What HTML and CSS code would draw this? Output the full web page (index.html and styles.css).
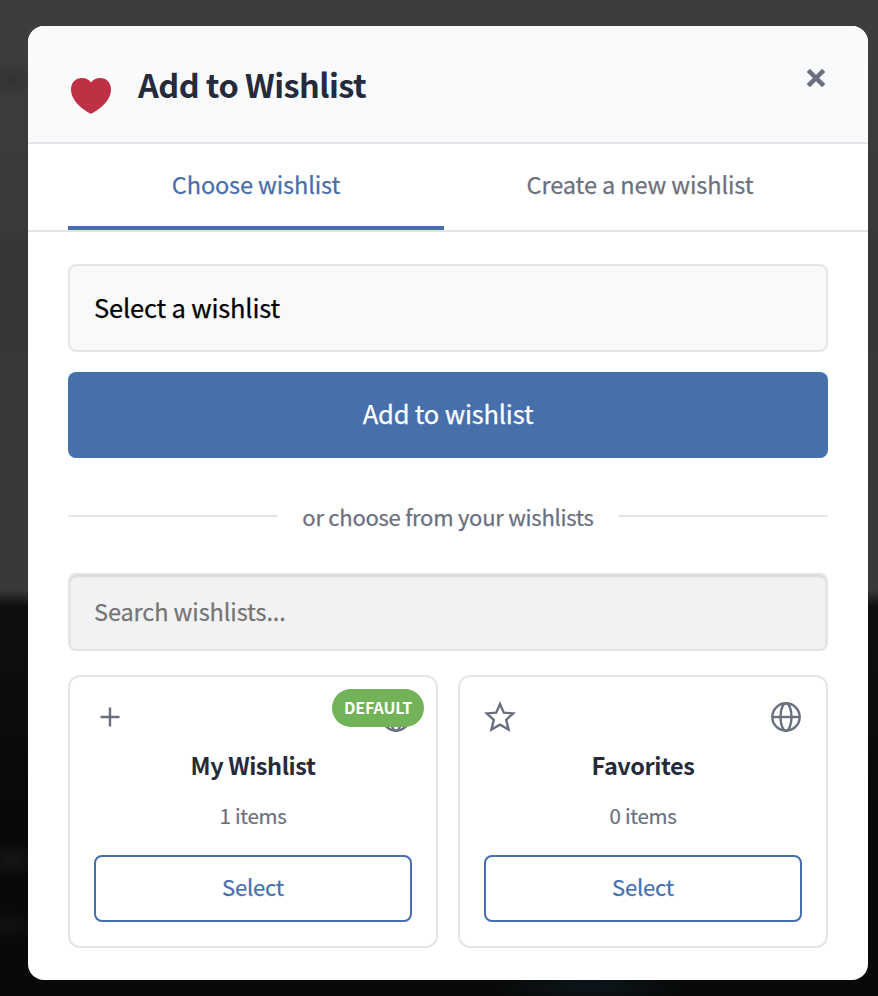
FILE: index.html
```
<!DOCTYPE html>
<html lang="en">
<head>
    <meta charset="UTF-8">
    <meta name="viewport" content="width=device-width, initial-scale=1.0">
    <title>Add to Wishlist</title>
    <link rel="stylesheet" href="styles.css">
</head>
<body>
    <div class="modal">
        <div class="header">
            <svg class="heart" viewBox="0 0 40 36">
                <path d="M20 35.8C17.500 35 0 25 0 11.500C0 4.500 4.500 0 11 0C15 0 18 1.800 20 4.400C22 1.800 25 0 29 0C35.500 0 40 4.500 40 11.500C40 25 22.500 35 20 35.800Z"/>
            </svg>
            <h1>Add to Wishlist</h1>
            <button class="close" aria-label="Close">
                <svg viewBox="0 0 20 20"><path d="M2.300 2.300L17.700 17.700M17.700 2.300L2.300 17.700"/></svg>
            </button>
        </div>

        <div class="tabs">
            <button class="tab active">Choose wishlist</button>
            <button class="tab">Create a new wishlist</button>
        </div>

        <div class="content">
            <div class="select_box">Select a wishlist</div>
            <button class="add_btn">Add to wishlist</button>

            <div class="divider"><span>or choose from your wishlists</span></div>

            <input class="search" type="text" placeholder="Search wishlists...">

            <div class="cards">
                <div class="card">
                    <span class="badge">DEFAULT</span>
                    <div class="card_icons">
                        <svg class="icon" viewBox="0 0 32 32"><path d="M16 6.500V25.500M6.500 16H25.500"/></svg>
                        <svg class="icon" viewBox="0 0 32 32">
                            <circle cx="16" cy="16" r="13.700"/>
                            <ellipse cx="16" cy="16" rx="5.500" ry="13.700"/>
                            <path d="M2.300 16H29.700"/>
                        </svg>
                    </div>
                    <h2>My Wishlist</h2>
                    <p>1 items</p>
                    <button class="select_btn">Select</button>
                </div>
                <div class="card">
                    <div class="card_icons">
                        <svg class="icon" viewBox="0 0 32 32"><path d="M16 3L19.800 11.700L29.200 12.400L22.200 18.800L24.600 28.500L16 23.700L7.400 28.500L9.800 18.800L2.800 12.400L12.200 11.700Z"/></svg>
                        <svg class="icon" viewBox="0 0 32 32">
                            <circle cx="16" cy="16" r="13.700"/>
                            <ellipse cx="16" cy="16" rx="5.500" ry="13.700"/>
                            <path d="M2.300 16H29.700"/>
                        </svg>
                    </div>
                    <h2>Favorites</h2>
                    <p>0 items</p>
                    <button class="select_btn">Select</button>
                </div>
            </div>
        </div>
    </div>
</body>
</html>
```
FILE: styles.css
```
*{
    box-sizing: border-box;
}
body{
    margin: 0;
    height: 996px;
    padding: 26px 10px 16px 28px;
    overflow: hidden;
    font-family: "Noto Sans CJK SC", "Noto Sans", sans-serif;
    color: #252b3a;
    background:
        radial-gradient(ellipse 34px 20px at 12px 80px, #333333, transparent),
        radial-gradient(ellipse 34px 18px at 12px 860px, #151717, transparent),
        radial-gradient(ellipse 30px 14px at 8px 925px, #121414, transparent),
        radial-gradient(ellipse 90px 14px at 590px 987px, #0d171c, transparent),
        linear-gradient(#3d3d3d, #3a3a3a 225px, #353736 240px, #383a39 590px, #0d0f10 606px, #080a0a 800px, #080a0a);
}
button, input{
    font-family: inherit;
}
h1, h2, p{
    margin: 0;
}
.modal{
    height: 954px;
    background-color: #fff;
    border-radius: 16px;
    overflow: hidden;
}
.header{
    display: flex;
    align-items: center;
    height: 118px;
    padding: 0 40px;
    background-color: #f9fafc;
    border-bottom: 2px solid #e4e5eb;
}
.heart{
    width: 40px;
    height: 36px;
    margin: 23px 27px 0 3px;
    fill: #be3144;
}
.header h1{
    flex: 1;
    font-size: 32.5px;
    line-height: 48px;
    font-weight: 700;
    letter-spacing: -0.55px;
}
.close{
    width: 20px;
    height: 20px;
    margin: 0 2px 12px 0;
    padding: 0;
    border: none;
    background: none;
}
.close svg{
    display: block;
    fill: none;
    stroke: #6b7080;
    stroke-width: 4.5;
}
.tabs{
    display: flex;
    height: 88px;
    padding: 0 40px;
    gap: 8px;
    border-bottom: 2px solid #e4e5eb;
}
.tab{
    flex: 1;
    padding: 0 0 3px;
    border: none;
    border-bottom: 4px solid transparent;
    background: none;
    font-size: 23.5px;
    letter-spacing: -0.12px;
    -webkit-text-stroke: 0.25px;
    color: #6b7080;
}
.tab.active{
    color: #466fac;
    border-bottom-color: #466fac;
}
.content{
    padding: 32px 40px;
}
.select_box{
    height: 88px;
    padding: 0 24px 2px;
    border: 2px solid #e4e5eb;
    border-radius: 8px;
    background-color: #f9f9f9;
    font-size: 25.5px;
    line-height: 82px;
    letter-spacing: -0.18px;
    -webkit-text-stroke: 0.25px;
    color: #000;
}
.add_btn{
    display: block;
    width: 100%;
    height: 86px;
    margin-top: 20px;
    padding: 0 0 5px;
    border: none;
    border-radius: 8px;
    background-color: #466fac;
    color: #fff;
    font-size: 25.5px;
    letter-spacing: -0.18px;
    -webkit-text-stroke: 0.25px;
}
.divider{
    display: flex;
    align-items: center;
    gap: 24px;
    height: 36px;
    margin: 40px 0 39px;
    font-size: 22px;
    letter-spacing: -0.26px;
    -webkit-text-stroke: 0.25px;
    color: #6b7080;
}
.divider::before, .divider::after{
    content: "";
    flex: 1;
    height: 2px;
    background-color: #e4e5eb;
}
.search{
    display: block;
    width: 100%;
    height: 78px;
    padding: 0 24px 2px;
    border: 2px solid #e4e5eb;
    border-radius: 8px;
    background-color: #f2f2f2;
    box-shadow: inset 0 2px 2px #d4d5d9, inset 0 0 1px #e4e5eb;
    font-size: 23.5px;
    letter-spacing: -0.1px;
    -webkit-text-stroke: 0.25px;
}
.search::placeholder{
    color: #757575;
}
.cards{
    display: grid;
    grid-template-columns: 1fr 1fr;
    gap: 20px;
    margin-top: 24px;
}
.card{
    position: relative;
    height: 273px;
    padding: 24px;
    border: 2px solid #e4e5eb;
    border-radius: 12px;
    text-align: center;
}
.card_icons{
    display: flex;
    justify-content: space-between;
}
.icon{
    width: 32px;
    height: 32px;
    fill: none;
    stroke: #6b7080;
    stroke-width: 2.4;
}
.card h2{
    margin-top: 14px;
    font-size: 23.5px;
    line-height: 36px;
    letter-spacing: -0.45px;
}
.card p{
    margin-top: 17px;
    font-size: 20.5px;
    line-height: 30px;
    letter-spacing: -0.3px;
    -webkit-text-stroke: 0.2px;
    color: #6b7080;
}
.select_btn{
    width: 100%;
    height: 67px;
    margin-top: 25px;
    padding: 0 0 5px;
    border: 2px solid #466fac;
    border-radius: 8px;
    background-color: #fff;
    color: #466fac;
    font-size: 22px;
    letter-spacing: -0.2px;
    -webkit-text-stroke: 0.25px;
}
.badge{
    position: absolute;
    top: 12px;
    right: 12px;
    height: 38px;
    padding: 0 12px;
    border-radius: 19px;
    background-color: #72b35a;
    color: #fff;
    font-size: 16px;
    font-weight: 700;
    line-height: 36px;
    letter-spacing: -0.15px;
}
```
